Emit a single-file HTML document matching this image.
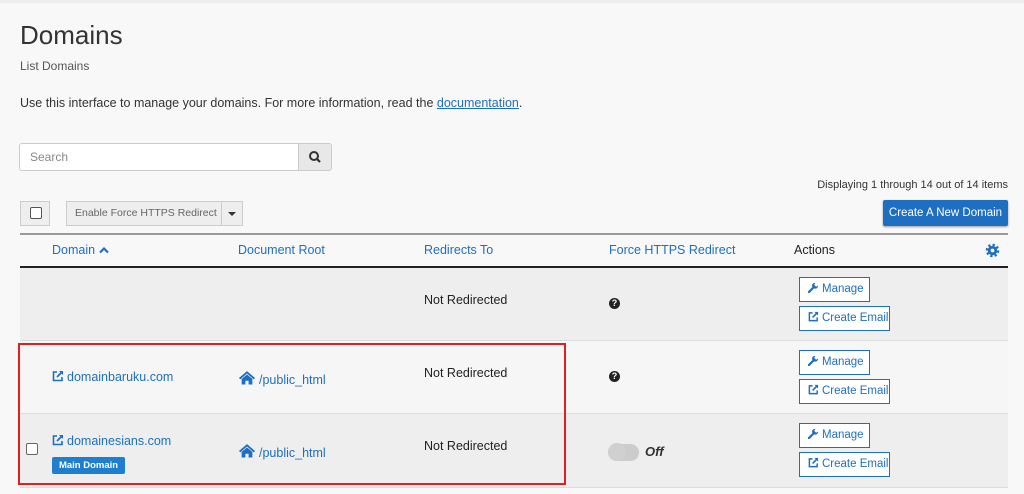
<!DOCTYPE html><html><head><style>
body{margin:0;width:1024px;height:494px;background:#f8f8f8;font-family:"Liberation Sans",sans-serif;position:relative;overflow:hidden;color:#333}
.a{position:absolute;white-space:nowrap}
.l{color:#1e6fc2}
.btn{position:absolute;border:1px solid #1e6fc2;background:#fff;color:#1e6fc2;font-size:11.5px;box-sizing:border-box;height:25px;line-height:23px;padding-left:8px}
.row{position:absolute;left:20px;width:988px}
.q{position:absolute;width:11px;height:11px;border-radius:50%;background:#222;color:#fff;font-size:9px;font-weight:bold;text-align:center;line-height:11px}
svg.i{vertical-align:-1px;margin-right:3px}
</style></head><body>
<svg width="0" height="0" style="position:absolute"><defs>
<symbol id="ext" viewBox="0 0 12 12"><path d="M5 2H1.5v8.5H10V7" fill="none" stroke="currentColor" stroke-width="1.6"/><path d="M7 1h4v4z" fill="currentColor"/><path d="M10 2L5 7" stroke="currentColor" stroke-width="1.8"/></symbol>
<symbol id="home" viewBox="0 0 16 14"><path d="M8 1L0.5 7.5l1.2 1.2L8 3.3l6.3 5.4 1.2-1.2z" fill="currentColor"/><path d="M3 8.3L8 4.2l5 4.1V13.5H9.5V10h-3v3.5H3z" fill="currentColor"/></symbol>
<symbol id="wr" viewBox="0 0 12 12"><path d="M1 11L6 6" stroke="currentColor" stroke-width="2.4" stroke-linecap="round"/><path d="M6.5 6.8A3 3 0 0 1 8 1L6.8 3.2l2 2L11 4A3 3 0 0 1 6.5 6.8z" fill="currentColor"/></symbol>
</defs></svg>
<div class="a" style="left:0;top:0;width:1024px;height:3px;background:#eee"></div>
<div class="a" style="left:20px;top:20px;font-size:26px;color:#333">Domains</div>
<div class="a" style="left:20px;top:59px;font-size:12px;color:#555">List Domains</div>
<div class="a" style="left:20px;top:96px;font-size:12.5px">Use this interface to manage your domains. For more information, read the <span class="l" style="text-decoration:underline">documentation</span>.</div>
<div class="a" style="left:19px;top:143px;width:280px;height:28px;background:#fff;border:1px solid #ccc;border-radius:3px 0 0 3px;box-sizing:border-box;font-size:12px;color:#888;line-height:26px;padding-left:10px">Search</div>
<div class="a" style="left:298px;top:143px;width:34px;height:28px;background:#e8e8e8;border:1px solid #ccc;box-sizing:border-box;border-radius:0 3px 3px 0">
<svg width="32" height="26" viewBox="0 0 32 26"><circle cx="15" cy="12" r="4" fill="none" stroke="#333" stroke-width="2"/><line x1="18" y1="15" x2="21" y2="18" stroke="#333" stroke-width="2.2"/></svg></div>
<div class="a" style="right:16px;top:179px;font-size:11px;color:#333">Displaying 1 through 14 out of 14 items</div>
<div class="a" style="left:20px;top:201px;width:30px;height:25px;background:#eee;border:1px solid #ccc;box-sizing:border-box"><div style="margin:5px 0 0 9px;width:10px;height:10px;border:1px solid #555;border-radius:2px;background:#fff"></div></div>
<div class="a" style="left:66px;top:201px;width:177px;height:25px;background:#eee;border:1px solid #ccc;box-sizing:border-box;font-size:10.5px;color:#666;line-height:23px;padding-left:8px">Enable Force HTTPS Redirect</div>
<div class="a" style="left:221px;top:202px;width:1px;height:23px;background:#ccc"></div>
<div class="a" style="left:228px;top:212px;width:0;height:0;border-left:4px solid transparent;border-right:4px solid transparent;border-top:4px solid #333"></div>
<div class="a" style="left:883px;top:200px;width:125px;height:26px;background:#1e6fc2;color:#fff;font-size:11.5px;line-height:26px;text-align:center;border-radius:2px;box-shadow:0 1px 2px #999">Create A New Domain</div>
<div class="a" style="left:20px;top:233px;width:988px;height:2px;background:#999"></div>
<div class="a l" style="left:52px;top:243px;font-size:12.5px">Domain <svg width="10" height="8" viewBox="0 0 10 8"><path d="M1 6.5L5 2.5l4 4" fill="none" stroke="#1e6fc2" stroke-width="2.2"/></svg></div>
<div class="a l" style="left:238px;top:243px;font-size:12.5px">Document Root</div>
<div class="a l" style="left:424px;top:243px;font-size:12.5px">Redirects To</div>
<div class="a l" style="left:609px;top:243px;font-size:12.5px">Force HTTPS Redirect</div>
<div class="a" style="left:794px;top:243px;font-size:12.5px;color:#222">Actions</div>
<svg class="a" style="left:985px;top:243px" width="15" height="15" viewBox="0 0 16 16"><circle cx="8" cy="8" r="5.5" fill="none" stroke="#1e6fc2" stroke-width="3.5" stroke-dasharray="2.2 2.1"/><circle cx="8" cy="8" r="5" fill="#1e6fc2"/><circle cx="8" cy="8" r="2" fill="#f8f8f8"/></svg>
<div class="a" style="left:20px;top:266px;width:988px;height:2px;background:#222"></div>
<div class="row" style="top:268px;height:72px;background:#eeeeee"></div>
<div class="row" style="top:340px;height:1px;background:#ddd"></div>
<div class="row" style="top:341px;height:72px;background:#f6f6f6"></div>
<div class="row" style="top:413px;height:1px;background:#ddd"></div>
<div class="row" style="top:414px;height:73px;background:#eeeeee"></div>
<div class="row" style="top:487px;height:1px;background:#ddd"></div>
<div class="a" style="left:424px;top:293px;font-size:12.5px;color:#222">Not Redirected</div>
<div class="a" style="left:424px;top:366px;font-size:12.5px;color:#222">Not Redirected</div>
<div class="a" style="left:424px;top:439px;font-size:12.5px;color:#222">Not Redirected</div>
<div class="q" style="left:609px;top:298px">?</div>
<div class="q" style="left:609px;top:371px">?</div>
<div class="a" style="left:608px;top:444px;width:31px;height:17px;border-radius:9px;background:#ccc"></div>
<div class="a" style="left:608px;top:443px;width:18px;height:18px;border-radius:50%;background:#d0d0d0"></div>
<div class="a" style="left:645px;top:444px;font-size:13px;font-weight:bold;font-style:italic;color:#333">Off</div>
<div class="a l" style="left:52px;top:370px;font-size:12.5px"><svg class="i" width="12" height="12"><use href="#ext"/></svg>domainbaruku.com</div>
<div class="a l" style="left:52px;top:434px;font-size:12.5px"><svg class="i" width="12" height="12"><use href="#ext"/></svg>domainesians.com</div>
<div class="a" style="left:52px;top:457px;width:73px;height:17px;background:#1e7fd0;color:#fff;font-size:9.5px;font-weight:bold;line-height:17px;text-align:center;border-radius:2px">Main Domain</div>
<div class="a" style="left:26px;top:443px;width:10px;height:10px;border:1px solid #666;border-radius:2px;background:#fff"></div>
<div class="a l" style="left:238px;top:370px;font-size:12.5px"><svg class="i" width="18" height="15"><use href="#home"/></svg>/public_html</div>
<div class="a l" style="left:238px;top:443px;font-size:12.5px"><svg class="i" width="18" height="15"><use href="#home"/></svg>/public_html</div>
<div class="btn" style="left:799px;top:277px;width:71px"><svg class="i" width="11" height="11"><use href="#wr"/></svg>Manage</div>
<div class="btn" style="left:799px;top:306px;width:91px"><svg class="i" width="11" height="11"><use href="#ext"/></svg>Create Email</div>
<div class="btn" style="left:799px;top:350px;width:71px"><svg class="i" width="11" height="11"><use href="#wr"/></svg>Manage</div>
<div class="btn" style="left:799px;top:379px;width:91px"><svg class="i" width="11" height="11"><use href="#ext"/></svg>Create Email</div>
<div class="btn" style="left:799px;top:423px;width:71px"><svg class="i" width="11" height="11"><use href="#wr"/></svg>Manage</div>
<div class="btn" style="left:799px;top:452px;width:91px"><svg class="i" width="11" height="11"><use href="#ext"/></svg>Create Email</div>
<div class="a" style="left:18px;top:343px;width:548px;height:142px;border:2px solid #e02020;box-sizing:border-box"></div>
</body></html>
